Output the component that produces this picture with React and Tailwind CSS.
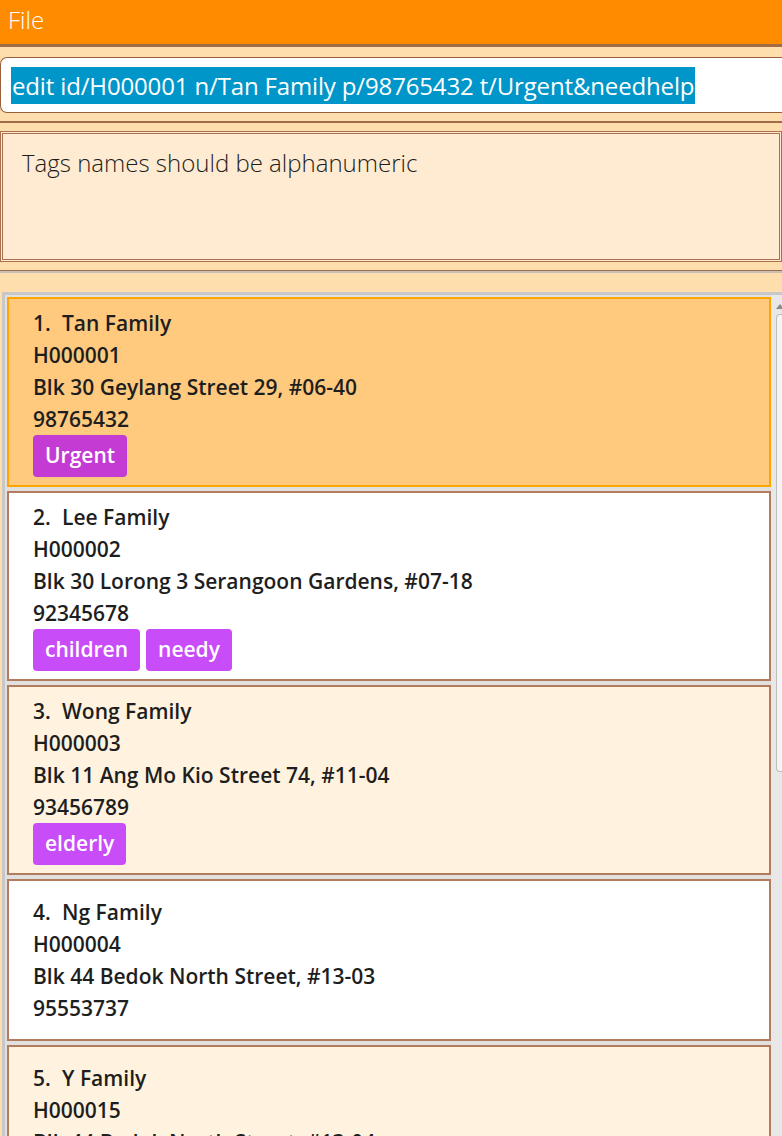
import React from "react";

const households = [
  {
    idx: 1,
    name: "Tan Family",
    id: "H000001",
    address: "Blk 30 Geylang Street 29, #06-40",
    phone: "98765432",
    tags: [{ label: "Urgent", urgent: true }],
    tone: "selected",
  },
  {
    idx: 2,
    name: "Lee Family",
    id: "H000002",
    address: "Blk 30 Lorong 3 Serangoon Gardens, #07-18",
    phone: "92345678",
    tags: [{ label: "children" }, { label: "needy" }],
    tone: "white",
  },
  {
    idx: 3,
    name: "Wong Family",
    id: "H000003",
    address: "Blk 11 Ang Mo Kio Street 74, #11-04",
    phone: "93456789",
    tags: [{ label: "elderly" }],
    tone: "cream",
  },
  {
    idx: 4,
    name: "Ng Family",
    id: "H000004",
    address: "Blk 44 Bedok North Street, #13-03",
    phone: "95553737",
    tags: [],
    tone: "white",
  },
  {
    idx: 5,
    name: "Y Family",
    id: "H000015",
    address: "Blk 44 Bedok North Street, #13-04",
    phone: "95553738",
    tags: [],
    tone: "cream",
  },
];

const toneClass = {
  selected: "bg-[#ffca7e] border-[#ffa500]",
  white: "bg-white border-[#b47c5c]",
  cream: "bg-[#fff3e0] border-[#b47c5c]",
};

function HouseholdCard({ h }) {
  return (
    <div
      className={`shrink-0 border-2 pl-[24px] flex flex-col justify-center ${toneClass[h.tone]} ${
        h.tags.length ? "h-[190px]" : "h-[162px]"
      }`}
    >
      <div className="flex leading-[32px]">
        <span className="w-[29px]">{h.idx}.</span>
        <span>{h.name}</span>
      </div>
      <div className="leading-[32px]">{h.id}</div>
      <div className="leading-[32px] whitespace-nowrap">{h.address}</div>
      <div className="leading-[32px]">{h.phone}</div>
      {h.tags.length > 0 && (
        <div className="flex gap-[6px]">
          {h.tags.map((t) => (
            <span
              key={t.label}
              className={`h-[42px] px-3 flex items-center rounded-[4px] text-white ${
                t.urgent ? "bg-[#c43bd4]" : "bg-[#c84cf8]"
              }`}
            >
              {t.label}
            </span>
          ))}
        </div>
      )}
    </div>
  );
}

export default function App() {
  return (
    <div
      className="w-[782px] h-[1136px] overflow-hidden bg-[#ffdead] flex flex-col"
      style={{ fontFamily: "'Open Sans', 'Noto Sans', sans-serif" }}
    >
      {/* Menu bar */}
      <div className="h-[47px] shrink-0 bg-[#ff8c00] border-b-[3px] border-[#a36c49] flex items-start pt-[4px] pl-2">
        <span className="text-white text-[24px] font-light leading-[32px]">File</span>
      </div>

      {/* Command box */}
      <div className="pt-[10px] pb-[8px] shrink-0">
        <div className="h-[56px] -mr-2 rounded-l-[7px] border-[1.5px] border-r-0 border-[#9b5e3a] bg-white flex items-center pl-[10px]">
          <span className="bg-[#0096c9] text-white text-[24px] leading-[37px] px-[1px] tracking-[-0.15px] whitespace-nowrap">
            edit id/H000001 n/Tan Family p/98765432 t/Urgent&amp;needhelp
          </span>
        </div>
      </div>
      <div className="h-[2px] bg-[#a06b4a] shrink-0" />

      {/* Result display */}
      <div className="pt-[8px] pb-[8px] shrink-0">
        <div className="h-[131px] border-[3px] border-double border-[#a8704e] bg-[#ffebd2] pl-[19px] pt-[11px]">
          <span className="text-[24px] font-light text-[#1d1d1d]">
            Tags names should be alphanumeric
          </span>
        </div>
      </div>
      <div className="h-[1px] bg-[#a06b4a] shrink-0" />
      <div className="h-[2px] bg-[#c9c0b5] shrink-0" />

      {/* List panel */}
      <div className="pt-[19px] flex-1 min-h-0 flex">
        <div className="flex-1 min-h-0 flex border-l-[3px] border-t-[3px] border-[#c8c8c8] ml-[2px] bg-[#e0e0e0]">
          <div className="flex-1 min-w-0 flex flex-col gap-[4px] pl-[2px] pt-[2px] text-[21px] font-semibold text-[#1e1e1e]">
            {households.map((h) => (
              <HouseholdCard key={h.idx} h={h} />
            ))}
          </div>
          {/* Scrollbar */}
          <div className="w-[11px] shrink-0 bg-[#e8e8e8] relative">
            <svg className="absolute top-[8px] left-[5px]" width="8" height="6" viewBox="0 0 8 6">
              <path d="M0 6 L4 1 L8 6 Z" fill="#8a8a8a" />
            </svg>
            <div className="absolute top-[19px] left-[5px] right-0 h-[458px] rounded-l-[4px] border border-r-0 border-[#bdbdbd] bg-[#f4f4f4]" />
          </div>
        </div>
      </div>
    </div>
  );
}
